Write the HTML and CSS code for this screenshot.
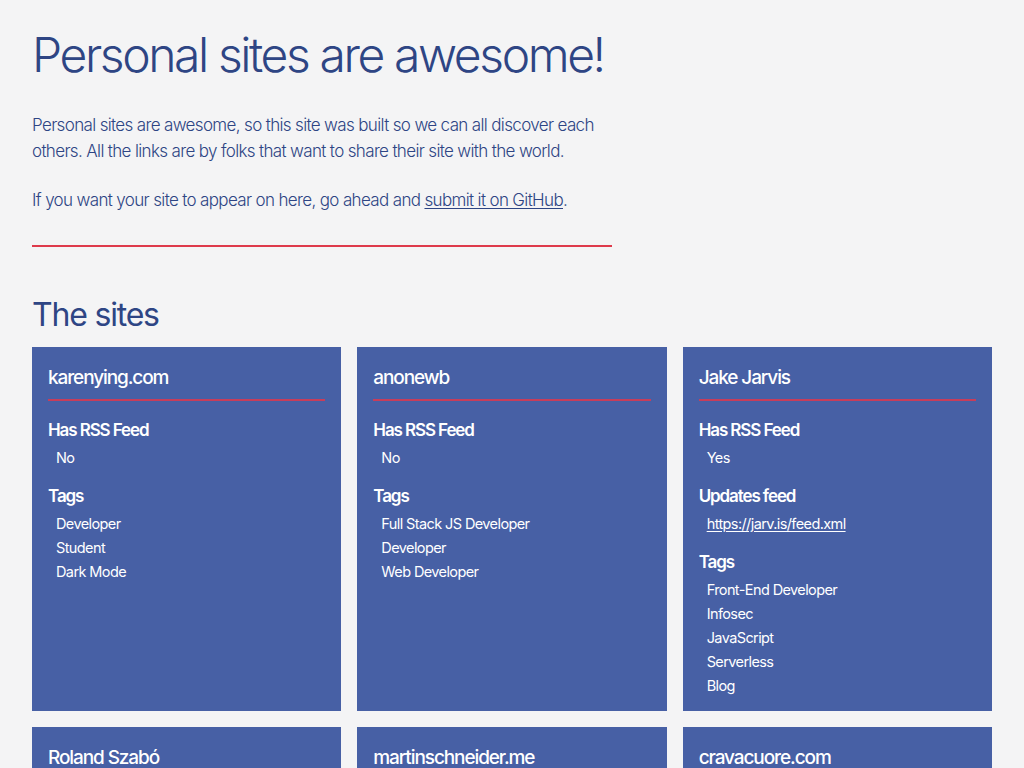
FILE: index.html
```html
<!DOCTYPE html>
<html lang="en">
<head>
<meta charset="utf-8">
<title>Personal sites are awesome!</title>
<link rel="stylesheet" href="styles.css">
</head>
<body>
<main class="page">
  <header class="intro">
    <h1 class="title">Personal sites are awesome!</h1>
    <p class="lead">Personal sites are awesome, so this site was built so we can all discover each others. All the links are by folks that want to share their site with the world.</p>
    <p class="lead">If you want your site to appear on here, go ahead and <a href="#">submit it on GitHub</a>.</p>
    <hr class="rule">
  </header>

  <h2 class="section-title">The sites</h2>

  <section class="grid">
    <article class="card">
      <h3 class="card-title">karenying.com</h3>
      <dl class="meta">
        <dt>Has RSS Feed</dt>
        <dd>No</dd>
        <dt>Tags</dt>
        <dd>
          <ul class="tags"><li>Developer</li><li>Student</li><li>Dark Mode</li></ul>
        </dd>
      </dl>
    </article>
    <article class="card">
      <h3 class="card-title">anonewb</h3>
      <dl class="meta">
        <dt>Has RSS Feed</dt>
        <dd>No</dd>
        <dt>Tags</dt>
        <dd>
          <ul class="tags"><li>Full Stack JS Developer</li><li>Developer</li><li>Web Developer</li></ul>
        </dd>
      </dl>
    </article>
    <article class="card">
      <h3 class="card-title">Jake Jarvis</h3>
      <dl class="meta">
        <dt>Has RSS Feed</dt>
        <dd>Yes</dd>
        <dt>Updates feed</dt>
        <dd><a href="#">https://jarv.is/feed.xml</a></dd>
        <dt>Tags</dt>
        <dd>
          <ul class="tags"><li>Front-End Developer</li><li>Infosec</li><li>JavaScript</li><li>Serverless</li><li>Blog</li></ul>
        </dd>
      </dl>
    </article>
    <article class="card">
      <h3 class="card-title">Roland Szabó</h3>
      <dl class="meta">
        <dt>Has RSS Feed</dt>
        <dd>No</dd>
      </dl>
    </article>
    <article class="card">
      <h3 class="card-title">martinschneider.me</h3>
      <dl class="meta">
        <dt>Has RSS Feed</dt>
        <dd>No</dd>
      </dl>
    </article>
    <article class="card">
      <h3 class="card-title">cravacuore.com</h3>
      <dl class="meta">
        <dt>Has RSS Feed</dt>
        <dd>No</dd>
      </dl>
    </article>
  </section>
</main>
</body>
</html>
```

FILE: styles.css
```css
* { box-sizing: border-box; }

html, body {
  margin: 0;
  padding: 0;
  background: #f4f4f5;
}

body {
  font-family: Inter, "Noto Sans", sans-serif;
  color: #2e4584;
}

.page {
  width: 960px;
  margin: 0 32px;
  padding-top: 26px;
}

.intro {
  width: 580px;
}

.title {
  margin: 0;
  font-size: 48px;
  font-weight: 300;
  line-height: 58px;
  letter-spacing: -2.4px;
  white-space: nowrap;
}

.lead {
  margin: 28px 0 0;
  font-size: 17px;
  font-weight: 300;
  line-height: 26px;
  letter-spacing: -0.65px;
}

.lead + .lead {
  margin-top: 23px;
}

.lead a {
  color: inherit;
  text-underline-offset: 2px;
}

.rule {
  margin: 32px 0 0;
  border: 0;
  height: 2px;
  background: #de3a4b;
}

.section-title {
  margin: 48px 0 0;
  font-size: 32px;
  font-weight: 400;
  line-height: 39px;
  letter-spacing: -1.2px;
}

.grid {
  margin-top: 13px;
  display: grid;
  grid-template-columns: repeat(3, 1fr);
  gap: 16px;
}

.card {
  background: #4760a5;
  color: #fff;
  padding: 18px 16px 13px;
}

.card-title {
  margin: 0;
  font-size: 19px;
  font-weight: 500;
  line-height: 26px;
  padding-bottom: 8px;
  border-bottom: 2px solid #c83d5a;
  letter-spacing: -1.1px;
}

.meta {
  margin: 17px 0 0;
}

.meta dt {
  font-size: 17px;
  font-weight: 600;
  line-height: 24px;
  letter-spacing: -1.1px;
}

.meta dd {
  margin: 4px 0 14px 8px;
  font-size: 14.5px;
  font-weight: 400;
  line-height: 24px;
  letter-spacing: -0.6px;
}

.meta dd:last-child {
  margin-bottom: 0;
}

.meta dd a {
  color: #fff;
  text-underline-offset: 2px;
}

.tags {
  list-style: none;
  margin: 0;
  padding: 0;
}
```
